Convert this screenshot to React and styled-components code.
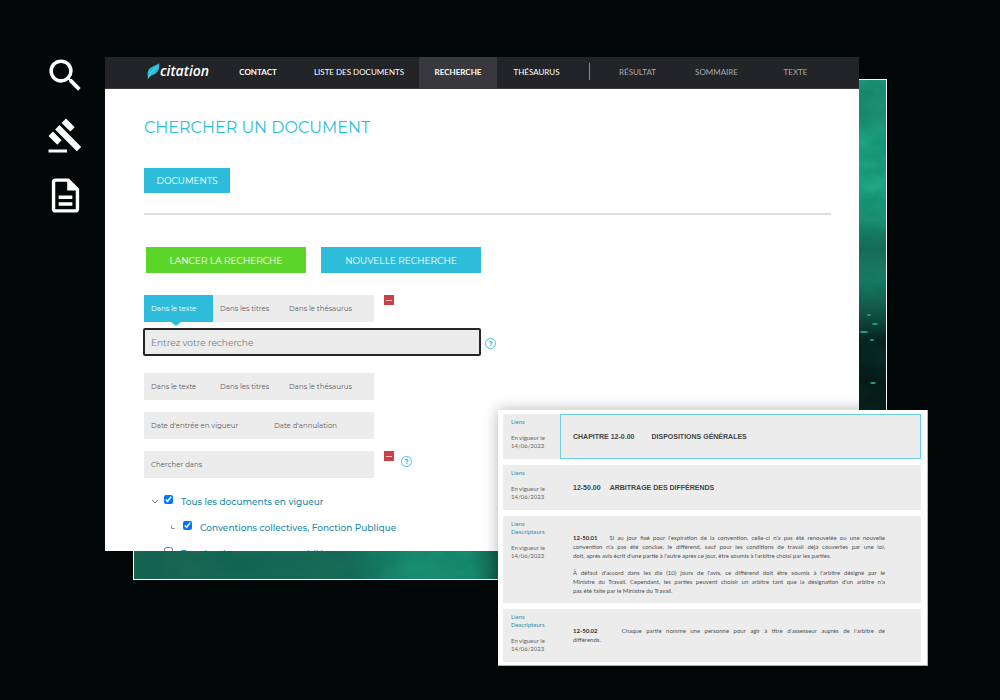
import React, { useState } from 'react';
import styled, { createGlobalStyle } from 'styled-components';
import { MdSearch, MdGavel, MdOutlineDescription } from 'react-icons/md';

const GlobalStyle = createGlobalStyle`
    * {
        box-sizing: border-box;
    }
    body {
        margin: 0;
        background: #020807;
        font-family: Montserrat, Inter, sans-serif;
    }
    button, input {
        font-family: inherit;
    }
`

const Page = styled.div`
    display: flex;
    height: 100vh;
    min-height: 640px;
    padding: 0 72px 34px 0;
    overflow: hidden;
`

const Sidebar = styled.aside`
    display: flex;
    flex-direction: column;
    flex: none;
    width: 105px;
    padding: 45px 0 0 26px;
    color: white;
`

const SideIcon = styled.span`
    display: flex;
    align-items: center;
    justify-content: center;
    height: 60px;
`

const Stage = styled.main`
    position: relative;
    display: flex;
    flex: 1;
    min-width: 0;
    margin-top: 57px;
`

const Backdrop = styled.svg`
    position: absolute;
    left: 28px;
    top: 22px;
    width: calc(100% - 69px);
    height: calc(100% - 108px);
    border: 1px solid white;
`

const Window = styled.section`
    position: relative;
    flex: 1;
    min-width: 0;
    margin: 0 69px 115px 0;
    background: white;
    overflow: hidden;
`

const NavBar = styled.nav`
    display: flex;
    align-items: stretch;
    height: 32px;
    background: #232428;
    border-bottom: 1px solid #3a373d;
`

const Logo = styled.a`
    display: flex;
    align-items: center;
    flex: none;
    width: 112px;
    padding: 0 0 4px 42px;
    color: white;
    font: italic 600 14px "Open Sans", sans-serif;
    text-decoration: none;
`

const NavLink = styled.a`
    display: flex;
    align-items: center;
    justify-content: center;
    flex: none;
    width: ${props => props.$width || 79}px;
    padding-bottom: 2px;
    color: ${props => props.$muted ? '#aaaaac' : 'white'};
    background: ${props => props.$active ? '#39393d' : 'none'};
    font-family: Lato, sans-serif;
    font-size: 8px;
    font-weight: ${props => props.$strong ? 700 : 400};
    text-decoration: none;
    white-space: nowrap;
`

const NavDivider = styled.span`
    width: 1px;
    margin: 6px 8px 8px 13px;
    background: #8b8b8e;
`

const Content = styled.div`
    padding: 27px 28px 0 39px;
`

const Title = styled.h1`
    margin: 0;
    color: #2dbddb;
    font-size: 16px;
    font-weight: 400;
    line-height: 24px;
`

const Button = styled.button`
    height: ${props => props.$small ? 25 : 26}px;
    width: ${props => props.$small ? 86 : 160}px;
    padding: 0;
    border: 0;
    color: white;
    background: ${props => props.$green ? '#5dd62c' : '#2dbddb'};
    font-size: 9px;
`

const Rule = styled.hr`
    height: 2px;
    margin: 20px 0 32px;
    border: 0;
    background: #dedede;
`

const Actions = styled.div`
    display: flex;
    gap: 15px;
    margin: 0 0 22px 2px;
`

const Line = styled.div`
    display: flex;
    align-items: ${props => props.$center ? 'center' : 'flex-start'};
    margin-bottom: ${props => props.$gap || 12}px;
`

const TabStrip = styled.div`
    display: flex;
    width: 230px;
    height: 27px;
    background: #ececec;
`

const Tab = styled.button`
    position: relative;
    flex: none;
    width: ${props => props.$wide ? 123 : 69}px;
    padding: 0 0 0 7px;
    border: 0;
    color: ${props => props.$active ? 'white' : '#5c5c5c'};
    background: ${props => props.$active ? '#2dbddb' : 'none'};
    font-size: 7px;
    text-align: left;
    white-space: nowrap;

    &:last-child {
        flex: 1;
    }
    &::after {
        content: '';
        display: ${props => props.$active ? 'block' : 'none'};
        position: absolute;
        left: 27px;
        top: 100%;
        border: 5px solid transparent;
        border-top: 4px solid #2dbddb;
        border-bottom: 0;
    }
`

const RemoveButton = styled.button`
    display: flex;
    align-items: center;
    justify-content: center;
    width: 10px;
    height: 10px;
    margin-left: 10px;
    padding: 0;
    border: 0;
    background: #cf3d45;

    &::after {
        content: '';
        width: 6px;
        height: 1px;
        background: #f3c9cb;
    }
`

const HelpButton = styled.button`
    display: flex;
    align-items: center;
    justify-content: center;
    width: 11px;
    height: 11px;
    margin: ${props => props.$low ? '5px 0 0 7px' : '3px 0 0 4px'};
    padding: 0;
    border: 1px solid #45c3de;
    border-radius: 50%;
    color: #2dbddb;
    background: white;
    font-size: 7px;
    font-weight: 700;
    line-height: 9px;
`

const SearchInput = styled.input`
    width: 338px;
    height: 28px;
    margin-left: -1px;
    padding: 0 6px;
    border: 2px solid #262626;
    border-radius: 2px;
    outline: 0;
    background: #ececec;
    color: #333;
    font-size: 9px;

    &::placeholder {
        color: #7b7b7b;
    }
`

const Tree = styled.ul`
    margin: 0;
    padding: 0;
    list-style: none;
`

const TreeRow = styled.li`
    display: flex;
    align-items: center;
    height: 26px;
    padding-left: ${props => props.$nested ? 26 : 7}px;
    color: #1b8ba4;

    svg {
        flex: none;
        width: 8px;
        height: 8px;
        margin-right: 5px;
    }
    input {
        width: 9px;
        height: 9px;
        margin: 0 8px 4px 0;
    }
    label {
        font-size: 9px;
        font-weight: 500;
        white-space: nowrap;
    }
`

const Panel = styled.section`
    position: absolute;
    right: 0;
    bottom: 0;
    display: flex;
    flex-direction: column;
    gap: 6px;
    width: 430px;
    padding: 4px 7px 4px 5px;
    background: white;
    box-shadow: 0 0 14px rgba(0, 0, 0, 0.3), inset -1px -1px 0 #b5b5b5;
`

const Article = styled.article`
    display: flex;
    background: #ececec;
`

const Meta = styled.div`
    flex: none;
    width: 57px;
    padding: 4px 0 9px 8px;
    font-family: Lato, sans-serif;
    font-size: 6px;
    line-height: 8px;
    color: #666;

    a {
        display: block;
        color: #2595ad;
        text-decoration: none;
    }
    p {
        margin: 8px 0 0;
    }
`

const Heading = styled.h2`
    display: flex;
    align-items: center;
    flex: 1;
    gap: ${props => props.$gap}px;
    margin: 0;
    padding-left: 12px;
    border: 1px solid ${props => props.$selected ? '#6dcfe3' : 'transparent'};
    color: #444;
    font: bold 7px "Liberation Sans", sans-serif;
`

const Body = styled.div`
    flex: 1;
    min-width: 0;
    padding: 17px 36px 8px 13px;
    color: #505050;
    font-family: Lato, sans-serif;
    font-size: 6px;
    line-height: 9px;

    p {
        margin: 0 0 8px;
    }
    p:last-child {
        margin: 0;
    }
    b {
        margin-right: ${props => props.$indent}px;
        font-weight: 700;
        color: #333;
    }
`

const TextLine = styled.span`
    display: block;
    white-space: nowrap;
    text-align-last: ${props => props.$last ? 'left' : 'justify'};
`

const articles = [
    { links: ['Liens'], number: 'CHAPITRE 12-0.00', title: 'DISPOSITIONS GÉNÉRALES', gap: 17, selected: true },
    { links: ['Liens'], number: '12-50.00', title: 'ARBITRAGE DES DIFFÉRENDS', gap: 9 },
    {
        links: ['Liens', 'Descripteurs'],
        number: '12-50.01',
        indent: 12,
        paragraphs: [
            [
                "Si au jour fixé pour l'expiration de la convention, celle-ci n'a pas été renouvelée ou une nouvelle",
                "convention n'a pas été conclue, le différend, sauf pour les conditions de travail déjà couvertes par une loi,",
                "doit, après avis écrit d'une partie à l'autre après ce jour, être soumis à l'arbitre choisi par les parties."
            ],
            [
                "À défaut d'accord dans les dix (10) jours de l'avis, ce différend doit être soumis à l'arbitre désigné par le",
                "Ministre du Travail. Cependant, les parties peuvent choisir un arbitre tant que la désignation d'un arbitre n'a",
                'pas été faite par le Ministre du Travail.'
            ]
        ]
    },
    {
        links: ['Liens', 'Descripteurs'],
        number: '12-50.02',
        indent: 24,
        paragraphs: [
            [
                "Chaque partie nomme une personne pour agir à titre d'assesseur auprès de l'arbitre de",
                'différends.'
            ]
        ]
    }
]

const Feather = () => (
    <svg width="13" height="16" viewBox="0 0 13 16" aria-hidden="true">
        <path d="M12 0C13 4.500 11.500 9.500 7 11.500C5 12.400 3 12.600 2 15L1 15.500C0 9 1 6 5 4C8.500 2.300 11 1.500 12 0Z" fill="#2dbddb" />
        <path d="M1 15.500C2.500 11 6 7 11 3" fill="none" stroke="#8be3f3" strokeWidth="0.500" />
    </svg>
)

const Texture = () => (
    <Backdrop viewBox="0 0 752 499" preserveAspectRatio="none" aria-hidden="true">
        <defs>
            <linearGradient id="side" x1="0" y1="0" x2="0" y2="1">
                <stop offset="0" stopColor="#1f9c7c" />
                <stop offset="0.070" stopColor="#1b8d70" />
                <stop offset="0.120" stopColor="#1da482" />
                <stop offset="0.230" stopColor="#1da684" />
                <stop offset="0.290" stopColor="#1a8c6f" />
                <stop offset="0.340" stopColor="#176b56" />
                <stop offset="0.400" stopColor="#188066" />
                <stop offset="0.470" stopColor="#114f40" />
                <stop offset="0.520" stopColor="#08241e" />
                <stop offset="0.600" stopColor="#061b17" />
                <stop offset="1" stopColor="#0b352b" />
            </linearGradient>
            <linearGradient id="floor" x1="0" y1="0" x2="1" y2="0">
                <stop offset="0" stopColor="#186451" />
                <stop offset="0.280" stopColor="#176b57" />
                <stop offset="0.370" stopColor="#198d71" />
                <stop offset="0.450" stopColor="#178a6d" />
                <stop offset="0.500" stopColor="#11513f" />
                <stop offset="1" stopColor="#0b352b" />
            </linearGradient>
            <filter id="grain" x="0" y="0" width="100%" height="100%">
                <feTurbulence type="fractalNoise" baseFrequency="0.025 0.040" numOctaves="5" seed="7" />
                <feColorMatrix values="0 0 0 0 0  0 0 0 0 0.100  0 0 0 0 0.080  0.600 0 0 0 -0.220" />
            </filter>
        </defs>
        <rect width="752" height="499" fill="url(#floor)" />
        <rect x="720" width="32" height="499" fill="url(#side)" />
        <rect width="752" height="499" filter="url(#grain)" />
        <g fill="#23a787">
            <ellipse cx="735" cy="235" rx="2" ry="1" />
            <ellipse cx="741" cy="244" rx="3" ry="1" />
            <ellipse cx="730" cy="252" rx="4" ry="1" />
            <ellipse cx="738" cy="260" rx="2" ry="1" />
            <ellipse cx="739" cy="303" rx="3" ry="1" />
        </g>
    </Backdrop>
)

const Chevron = () => (
    <svg viewBox="0 0 8 8" fill="none" stroke="#777" aria-hidden="true">
        <path d="M1 3L4 6L7 3" />
    </svg>
)

const Branch = () => (
    <svg viewBox="0 0 8 8" fill="none" stroke="#999" aria-hidden="true">
        <path d="M1.500 2V5.500H5" />
    </svg>
)

const Tabs = ({ labels, active, wide, onSelect }) => (
    <TabStrip>
        {labels.map(label => (
            <Tab key={label} type="button" $wide={wide} $active={label === active} onClick={() => onSelect && onSelect(label)}>
                {label}
            </Tab>
        ))}
    </TabStrip>
)

const TreeItem = ({ id, label, nested, checked, icon }) => (
    <TreeRow $nested={nested}>
        {icon}
        <input id={id} type="checkbox" defaultChecked={checked} />
        <label htmlFor={id}>{label}</label>
    </TreeRow>
)

const SingleArticle = ({ article }) => (
    <Article>
        <Meta>
            {article.links.map(link => <a key={link} href="#liens">{link}</a>)}
            <p>En vigueur le<br />14/06/2023</p>
        </Meta>
        {article.title
            ? <Heading $selected={article.selected} $gap={article.gap}>
                <span>{article.number}</span>
                <span>{article.title}</span>
            </Heading>
            : <Body $indent={article.indent}>
                {article.paragraphs.map((lines, p) => (
                    <p key={p}>
                        {lines.map((line, i) => (
                            <TextLine key={i} $last={i === lines.length - 1}>
                                {p === 0 && i === 0 && <b>{article.number}</b>}
                                {line}
                            </TextLine>
                        ))}
                    </p>
                ))}
            </Body>
        }
    </Article>
)

const scopes = ['Dans le texte', 'Dans les titres', 'Dans le thésaurus']

const App = () => {
    const [scope, setScope] = useState(scopes[0])

    return (
        <Page>
            <GlobalStyle />
            <Sidebar>
                <SideIcon><MdSearch size={43} /></SideIcon>
                <SideIcon><MdGavel size={37} /></SideIcon>
                <SideIcon><MdOutlineDescription size={41} /></SideIcon>
            </Sidebar>
            <Stage>
                <Texture />
                <Window>
                    <NavBar>
                        <Logo href="#accueil"><Feather />citation</Logo>
                        <NavLink href="#contact" $width={82} $strong>CONTACT</NavLink>
                        <NavLink href="#liste" $width={120}>LISTE DES DOCUMENTS</NavLink>
                        <NavLink href="#recherche" $width={78} $strong $active>RECHERCHE</NavLink>
                        <NavLink href="#thesaurus">THÉSAURUS</NavLink>
                        <NavDivider />
                        <NavLink href="#resultat" $muted>RÉSULTAT</NavLink>
                        <NavLink href="#sommaire" $muted>SOMMAIRE</NavLink>
                        <NavLink href="#texte" $muted>TEXTE</NavLink>
                    </NavBar>
                    <Content>
                        <Line $gap={28}><Title>CHERCHER UN DOCUMENT</Title></Line>
                        <Button type="button" $small>DOCUMENTS</Button>
                        <Rule />
                        <Actions>
                            <Button type="submit" $green>LANCER LA RECHERCHE</Button>
                            <Button type="reset">NOUVELLE RECHERCHE</Button>
                        </Actions>
                        <Line $gap={6}>
                            <Tabs labels={scopes} active={scope} onSelect={setScope} />
                            <RemoveButton type="button" aria-label="Retirer" />
                        </Line>
                        <Line $center $gap={17}>
                            <SearchInput type="text" placeholder="Entrez votre recherche" aria-label="Recherche" />
                            <HelpButton type="button">?</HelpButton>
                        </Line>
                        <Line><Tabs labels={scopes} /></Line>
                        <Line><Tabs wide labels={["Date d'entrée en vigueur", "Date d'annulation"]} /></Line>
                        <Line $gap={10}>
                            <Tabs wide labels={['Chercher dans']} />
                            <RemoveButton type="button" aria-label="Retirer" />
                            <HelpButton type="button" $low>?</HelpButton>
                        </Line>
                        <Tree>
                            <TreeItem id="tous" label="Tous les documents en vigueur" checked icon={<Chevron />} />
                            <TreeItem id="conventions" label="Conventions collectives, Fonction Publique" nested checked icon={<Branch />} />
                            <TreeItem id="publies" label="Tous les documents non publiés" icon={<Chevron />} />
                        </Tree>
                    </Content>
                </Window>
                <Panel>
                    {articles.map(article => <SingleArticle key={article.number} article={article} />)}
                </Panel>
            </Stage>
        </Page>
    )
}

export default App;
